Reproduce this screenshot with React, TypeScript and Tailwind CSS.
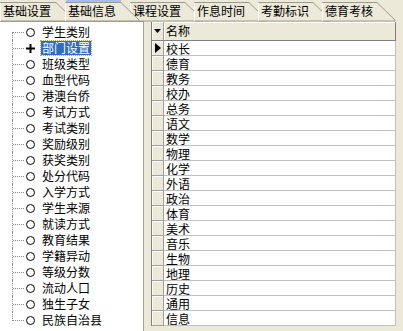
import React from 'react'

const tabs = [
  { label: '基础设置', width: 65 },
  { label: '基础信息', width: 65, active: true },
  { label: '课程设置', width: 64 },
  { label: '作息时间', width: 64 },
  { label: '考勤标识', width: 64 },
  { label: '德育考核', width: 64 },
]

const treeItems = [
  '学生类别', '部门设置', '班级类型', '血型代码', '港澳台侨', '考试方式', '考试类别',
  '奖励级别', '获奖类别', '处分代码', '入学方式', '学生来源', '就读方式', '教育结果',
  '学籍异动', '等级分数', '流动人口', '独生子女', '民族自治县',
]

const rows = [
  '校长', '德育', '教务', '校办', '总务', '语文', '数学', '物理', '化学', '外语',
  '政治', '体育', '美术', '音乐', '生物', '地理', '历史', '通用', '信息',
]

function Tab({ label, width, active }: { label: string; width: number; active?: boolean }) {
  return (
    <div className={`relative h-[21px] shrink-0 ${active ? 'z-10' : ''}`} style={{ width }}>
      {/* 台形のタブ */}
      <svg className="absolute left-0 top-0 overflow-visible" width={width + 10} height={21}>
        <polygon
          points={`0.5,21 0.5,2.5 ${width - 9},2.5 ${width + 9},20 ${width + 9},21`}
          fill="#ECE9D8"
          stroke="#9C9A90"
          strokeWidth={1}
        />
        <line x1={0.5} y1={21} x2={0.5} y2={3} stroke="#FFFFFF" />
        {active && <rect x={1} y={0} width={width - 10} height={2} fill="#A9B9F2" />}
      </svg>
      <span className="relative block pl-[3px] pt-[3px] text-[12px] leading-[15px] text-black">{label}</span>
    </div>
  )
}

function TreeRow({ label, index, last }: { label: string; index: number; last: boolean }) {
  const selected = index === 1
  return (
    <div className="flex h-[16px] items-stretch">
      <div className="w-[12px] shrink-0" />
      {/* 点線 */}
      <div className="relative w-[12px] shrink-0">
        <div
          className={`absolute left-0 w-0 border-l border-dotted border-[#8a8a8a] ${
            index === 0 ? 'top-[8px] bottom-0' : last ? 'top-0 h-[9px]' : 'top-0 bottom-0'
          }`}
        />
        <div className="absolute left-[1px] top-[8px] w-[11px] border-t border-dotted border-[#8a8a8a]" />
      </div>
      <div className="flex w-[17px] shrink-0 items-center justify-center pr-[4px]">
        {selected ? (
          <svg width="9" height="9" viewBox="0 0 9 9">
            <rect x="0" y="3.5" width="9" height="2" fill="#000" />
            <rect x="3.5" y="0" width="2" height="9" fill="#000" />
          </svg>
        ) : (
          <span className="block h-[9px] w-[9px] rounded-full border-[1.5px] border-black" />
        )}
      </div>
      <div className="flex items-center">
        <span
          className={`px-[1px] text-[12px] leading-[14px] ${
            selected ? 'bg-[#316AC5] text-white outline outline-1 outline-dotted outline-[#C9A24A]' : 'text-black'
          }`}
        >
          {label}
        </span>
      </div>
    </div>
  )
}

export default function App() {
  return (
    <div
      className="h-[331px] w-[403px] overflow-hidden bg-[#ECE9D8]"
      style={{ fontFamily: '"Noto Sans CJK SC", "Noto Sans", sans-serif' }}
    >
      {/* タブ */}
      <div className="flex h-[21px]">
        {tabs.map((t) => (
          <Tab key={t.label} {...t} />
        ))}
      </div>

      <div className="flex h-[310px]">
        {/* ツリー */}
        <div className="h-full w-[144px] shrink-0 border-r border-t border-[#A5A293] bg-white pt-[2px]">
          {treeItems.map((item, i) => (
            <TreeRow key={item} label={item} index={i} last={i === treeItems.length - 1} />
          ))}
        </div>

        {/* グリッド */}
        <div className="ml-[7px] mt-[1px] flex w-[245px] flex-col self-start border-l border-[#808080]">
          <div className="flex h-[19px] border-b border-[#808080]">
            <div className="flex w-[12px] items-center justify-center border-r border-[#A0A0A0] bg-[#ECE9D8] shadow-[inset_1px_1px_0_#fff]">
              <svg width="7" height="4" viewBox="0 0 7 4">
                <polygon points="0,0 7,0 3.5,4" fill="#000" />
              </svg>
            </div>
            <div className="flex flex-1 items-center border-r border-[#808080] bg-[#ECE9D8] pl-[2px] text-[12px] leading-[14px] text-black shadow-[inset_1px_1px_0_#fff]">
              名称
            </div>
          </div>
          {rows.map((r, i) => (
            <div key={r} className="flex h-[15px]">
              <div className="flex w-[12px] items-center justify-center border-b border-r border-[#A0A0A0] bg-[#ECE9D8] shadow-[inset_1px_1px_0_#fff]">
                {i === 0 && (
                  <svg width="6" height="10" viewBox="0 0 6 10">
                    <polygon points="0,0 6,5 0,10" fill="#000" />
                  </svg>
                )}
              </div>
              <div className="flex flex-1 items-center overflow-hidden border-b border-r border-[#C0C0C0] bg-white pl-[2px] text-[12px] leading-[13px] text-black">
                {r}
              </div>
            </div>
          ))}
        </div>
      </div>
    </div>
  )
}
